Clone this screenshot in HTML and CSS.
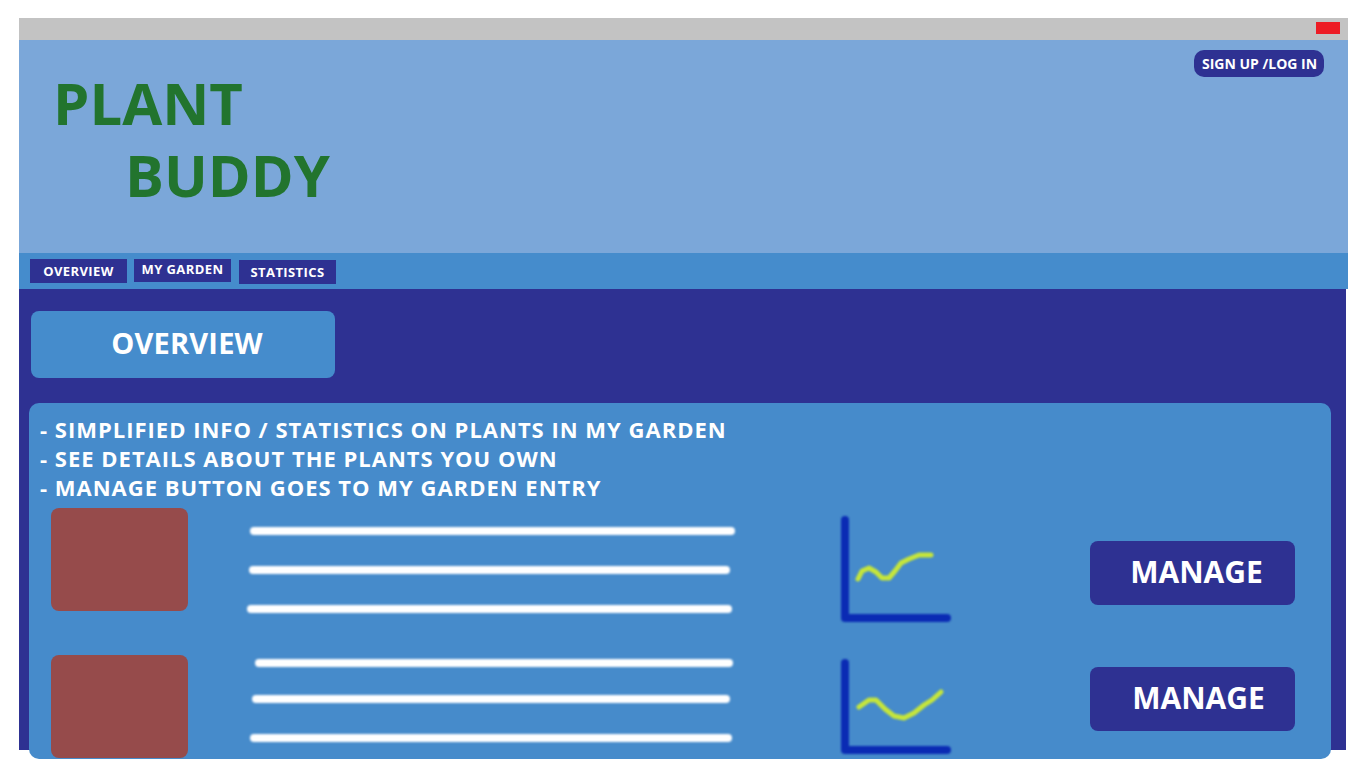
FILE: index.html
```html
<!DOCTYPE html>
<html lang="en">
<head>
<meta charset="utf-8">
<title>Plant Buddy</title>
<link rel="stylesheet" href="styles.css">
</head>
<body>
<div class="page">
  <div class="frame">
    <div class="titlebar"><span class="close"></span></div>
    <header class="header">
      <h1 class="logo"><span class="logo-1">PLANT</span><span class="logo-2">BUDDY</span></h1>
      <button class="signup">SIGN UP /LOG IN</button>
    </header>
    <nav class="nav">
      <a class="tab">OVERVIEW</a>
      <a class="tab tab-high">MY GARDEN</a>
      <a class="tab tab-low">STATISTICS</a>
    </nav>
    <main class="main">
      <div class="section-title">OVERVIEW</div>
      <section class="card">
        <ul class="notes">
          <li>- SIMPLIFIED INFO / STATISTICS ON PLANTS IN MY GARDEN</li>
          <li>- SEE DETAILS ABOUT THE PLANTS YOU OWN</li>
          <li>- MANAGE BUTTON GOES TO MY GARDEN ENTRY</li>
        </ul>
        <div class="row row-a">
          <div class="thumb"></div>
          <div class="bars">
            <div class="bar"></div>
            <div class="bar"></div>
            <div class="bar"></div>
          </div>
          <svg class="chart" width="130" height="104" viewBox="0 0 130 104">
            <polyline points="16,12 16,110 118,110" fill="none" stroke="#0a2bb4" stroke-width="8" stroke-linecap="round" stroke-linejoin="round"/>
            <polyline points="29,71 33,63 40,60 47,64 53,70 60,70 66,63 72,55 80,51 90,47 102,47" fill="none" stroke="#c6e63a" stroke-width="5" stroke-linecap="round" stroke-linejoin="round"/>
          </svg>
          <button class="manage">MANAGE</button>
        </div>
        <div class="row row-b">
          <div class="thumb"></div>
          <div class="bars">
            <div class="bar"></div>
            <div class="bar"></div>
            <div class="bar"></div>
          </div>
          <svg class="chart" width="130" height="104" viewBox="0 0 130 104">
            <polyline points="16,8 16,95 118,95" fill="none" stroke="#0a2bb4" stroke-width="8" stroke-linecap="round" stroke-linejoin="round"/>
            <polyline points="30,52 40,45 47,45 56,54 65,61 75,63 85,58 95,50 103,45 112,37" fill="none" stroke="#c6e63a" stroke-width="5" stroke-linecap="round" stroke-linejoin="round"/>
          </svg>
          <button class="manage">MANAGE</button>
        </div>
      </section>
    </main>
  </div>
</div>
</body>
</html>
```

FILE: styles.css
```css
* { box-sizing: border-box; }

html, body {
  margin: 0;
  padding: 0;
  background: #ffffff;
  font-family: "Open Sans", "Noto Sans", sans-serif;
  overflow: hidden;
}

.page {
  width: 1366px;
  height: 768px;
  padding: 18px 0 0 19px;
}

.frame {
  width: 1329px;
}

.titlebar {
  height: 22px;
  background: #c3c3c3;
  display: flex;
  justify-content: flex-end;
  align-items: flex-start;
  padding: 4px 8px 0 0;
}

.close {
  width: 24px;
  height: 12px;
  background: #ed1c24;
}

.header {
  height: 213px;
  background: #7ba7d9;
  display: flex;
  justify-content: space-between;
  align-items: flex-start;
  padding: 0 24px 0 34px;
}

.logo {
  margin: 27px 0 0;
  font-size: 58px;
  font-weight: 700;
  line-height: 72px;
  color: #22742e;
  display: flex;
  flex-direction: column;
  letter-spacing: 0;
}

.logo-2 {
  padding-left: 72px;
}

.signup {
  margin-top: 10px;
  width: 130px;
  height: 27px;
  border: none;
  border-radius: 10px;
  background: #2e3192;
  color: #ffffff;
  font-family: inherit;
  font-size: 14px;
  font-weight: 700;
  padding: 0 0 0 1px;
  letter-spacing: 0;
}

.nav {
  height: 36px;
  background: #458ccc;
  display: flex;
  align-items: flex-start;
  padding: 6px 0 0 11px;
  gap: 7px;
}

.tab {
  width: 97px;
  height: 24px;
  background: #2e3192;
  color: #ffffff;
  font-size: 13px;
  font-weight: 700;
  display: flex;
  align-items: center;
  justify-content: center;
  letter-spacing: 0.4px;
}

.tab-high {
  align-items: flex-start;
  padding-top: 1px;
  height: 23px;
}

.tab-low {
  margin-top: 1px;
  margin-left: 1px;
}

.main {
  height: 461px;
  margin-right: 2px;
  background: #2e3192;
  padding: 22px 0 0 10px;
}

.section-title {
  margin-left: 2px;
  width: 304px;
  height: 67px;
  border-radius: 8px;
  background: #458ccc;
  color: #ffffff;
  font-size: 29px;
  font-weight: 700;
  display: flex;
  align-items: center;
  justify-content: center;
  letter-spacing: 0.2px;
  padding-bottom: 5px;
  padding-left: 8px;
}

.card {
  margin-top: 25px;
  width: 1302px;
  height: 356px;
  border-radius: 10px;
  background: #468bcb;
  padding: 12px 0 0 11px;
}

.notes {
  list-style: none;
  margin: 0;
  padding: 0;
  color: #ffffff;
  font-size: 22px;
  font-weight: 700;
  line-height: 29px;
  letter-spacing: 1px;
}

.row {
  display: flex;
  align-items: flex-start;
  height: 103px;
  padding-left: 11px;
}

.row-a { margin-top: 6px; }
.row-b { margin-top: 44px; }

.thumb {
  width: 137px;
  height: 103px;
  border-radius: 8px;
  background: #964b4b;
  flex: none;
}

.bars {
  width: 490px;
  margin-left: 58px;
  display: flex;
  flex-direction: column;
  flex: none;
}

.bar {
  height: 8px;
  border-radius: 4px;
  background: #ffffff;
  filter: blur(1.3px);
}

.row-a .bars { padding-top: 19px; gap: 31px; }
.row-a .bar:nth-child(1) { margin: 0 0 0 4px; width: 485px; }
.row-a .bar:nth-child(2) { margin: 0 0 0 3px; width: 481px; }
.row-a .bar:nth-child(3) { margin: 0 0 0 1px; width: 485px; }

.row-b .bars { padding-top: 4px; }
.row-b .bar:nth-child(1) { margin: 0 0 0 9px; width: 478px; }
.row-b .bar:nth-child(2) { margin: 28px 0 0 6px; width: 478px; }
.row-b .bar:nth-child(3) { margin: 31px 0 0 4px; width: 482px; }

.chart {
  margin-left: 93px;
  flex: none;
  overflow: visible;
  filter: blur(0.8px);
}

.manage {
  flex: none;
  margin-left: 131px;
  width: 205px;
  height: 64px;
  border: none;
  border-radius: 8px;
  background: #2e3192;
  color: #ffffff;
  font-family: inherit;
  font-size: 30px;
  font-weight: 700;
  padding: 0 0 4px 8px;
  letter-spacing: 0;
}

.row-a .manage { margin-top: 33px; }
.row-b .manage { margin-top: 12px; padding-left: 12px; }
```
